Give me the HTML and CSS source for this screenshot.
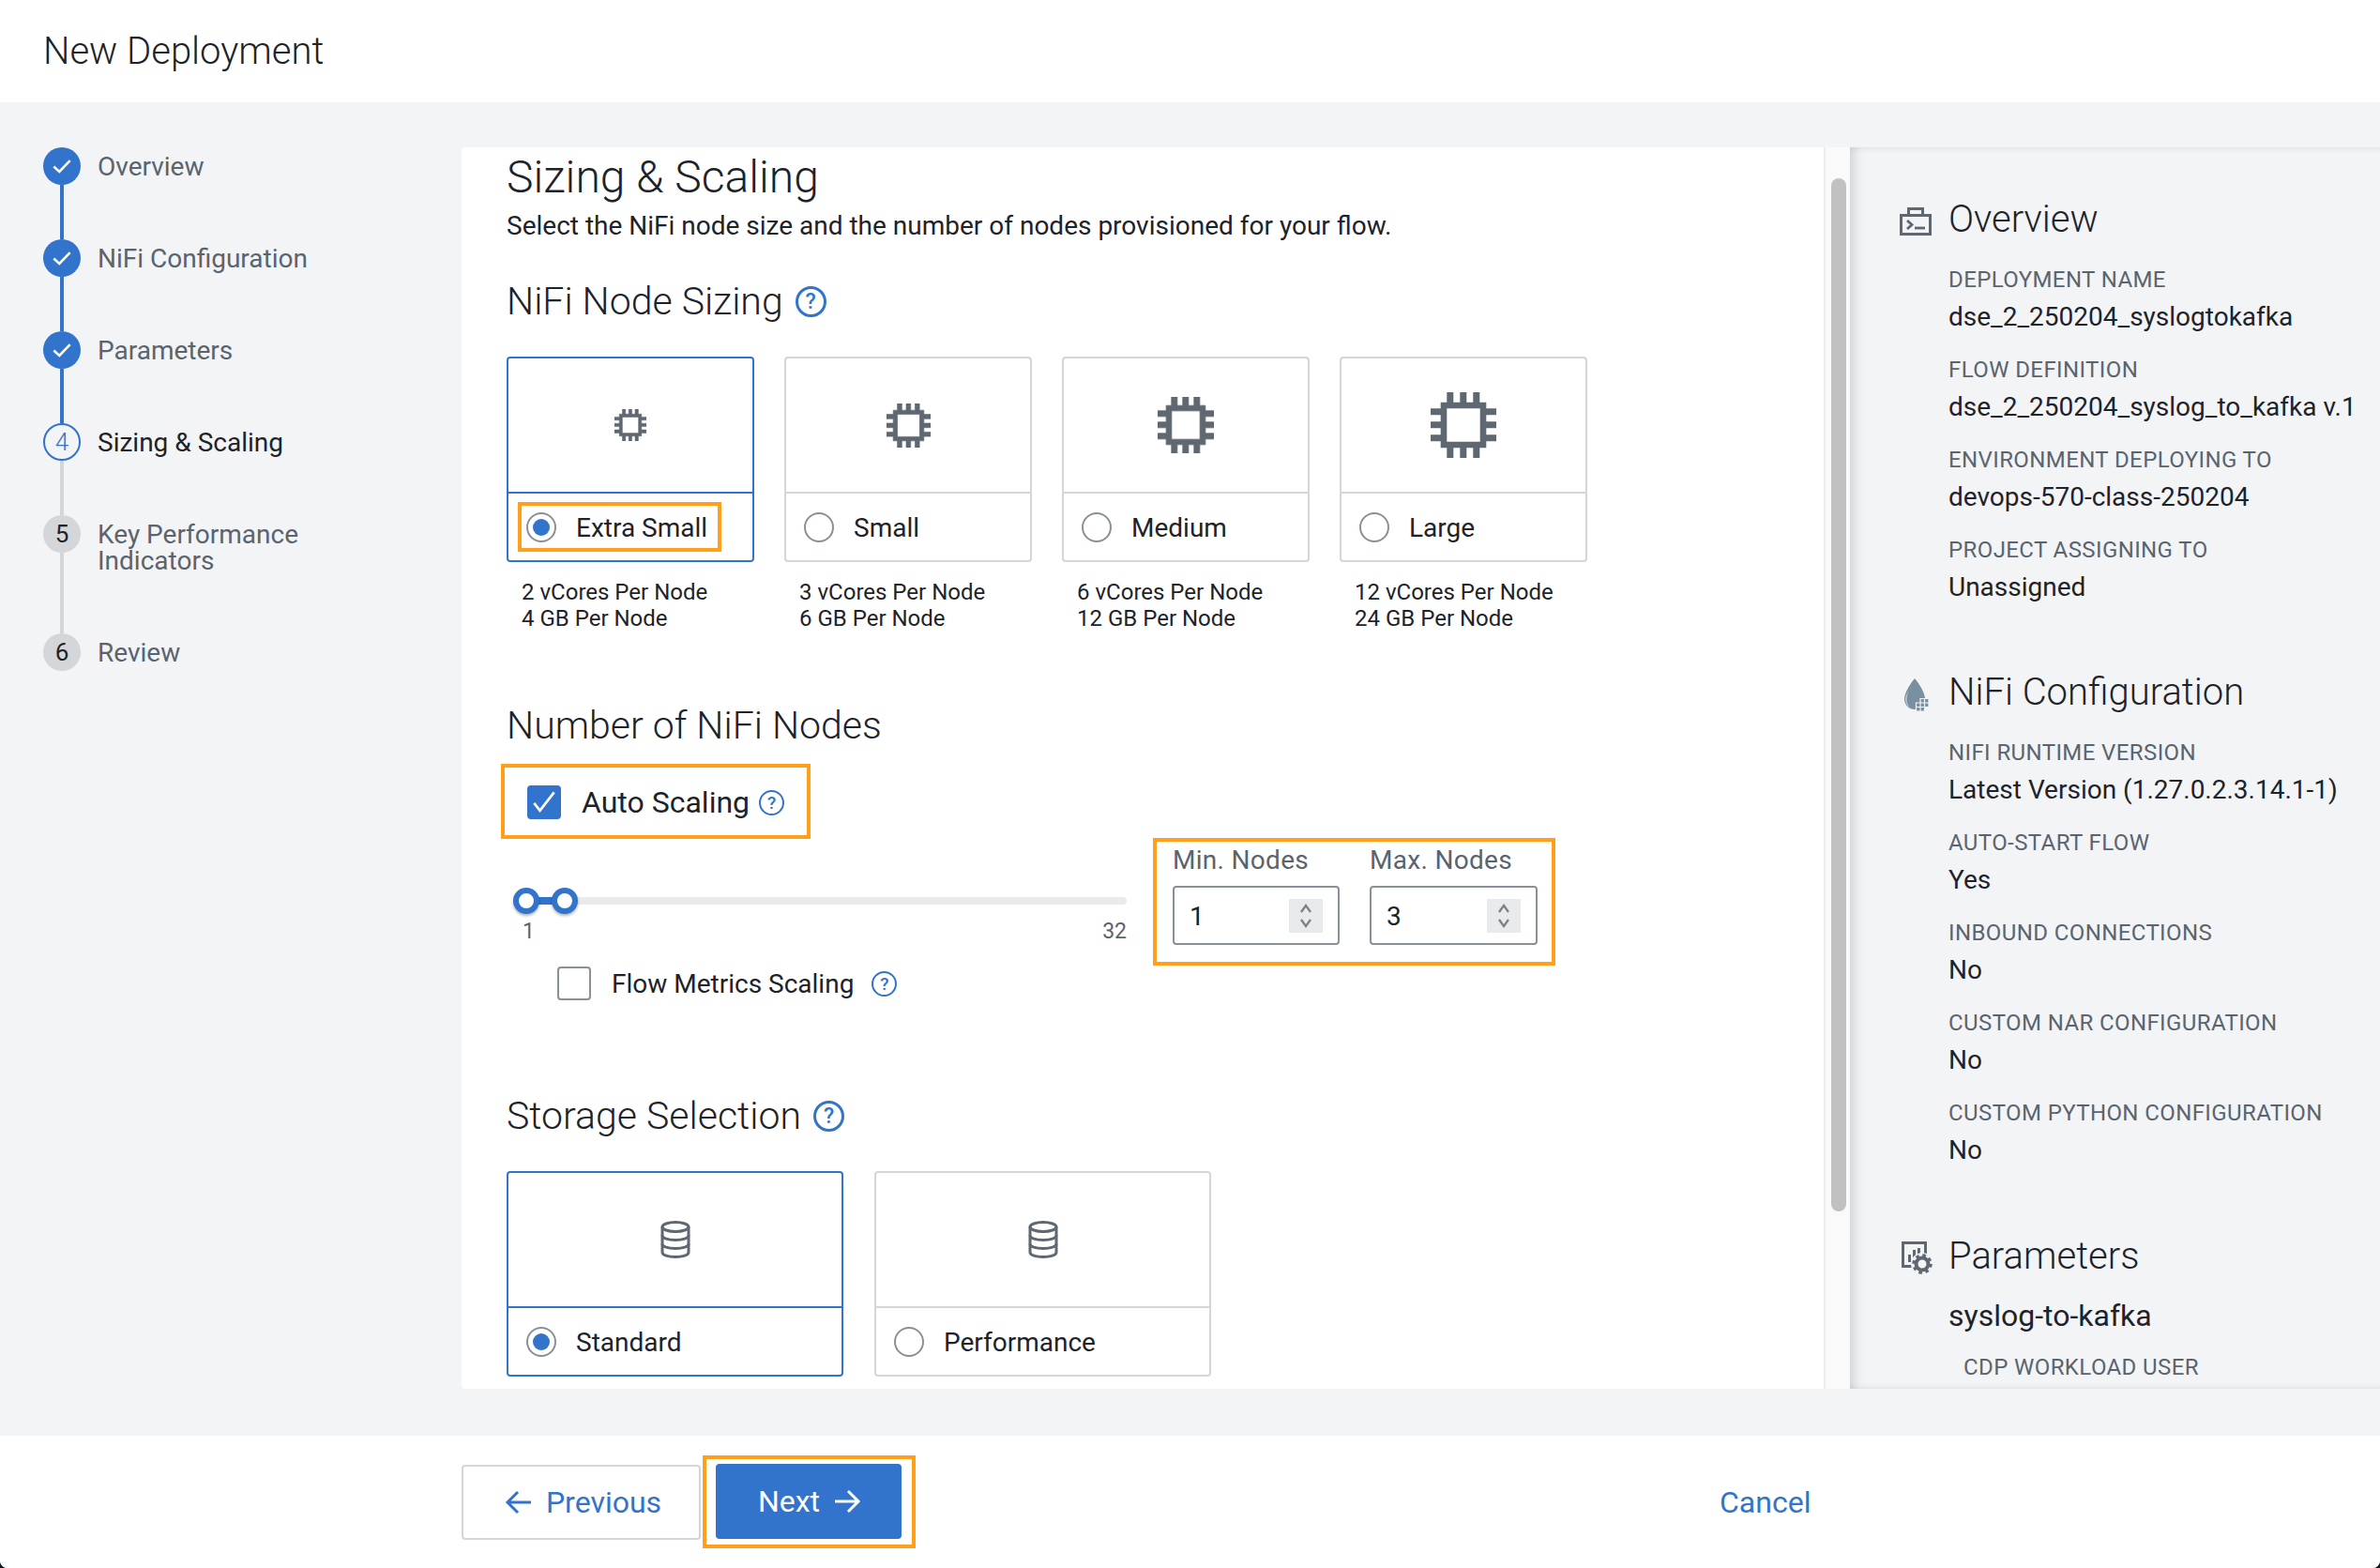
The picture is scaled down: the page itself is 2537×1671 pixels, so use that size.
FILE: index.html
```html
<!DOCTYPE html>
<html lang="en">
<head>
<meta charset="utf-8">
<title>New Deployment</title>
<link rel="stylesheet" href="styles.css">
</head>
<body>
<svg class="defs" width="0" height="0" aria-hidden="true">
  <symbol id="chip" viewBox="0 0 70 70">
    <path fill-rule="evenodd" d="M17.3 0h7v10.7h7V0h7v10.7h7V0h7v10.7h7v6.6H70v7H59.3v7H70v7H59.3v7H70v7H59.3v7h-7V70h-7V59.3h-7V70h-7V59.3h-7V70h-7V59.3h-6.6v-7H0v-7h10.7v-7H0v-7h10.7v-7H0v-7h10.7v-6.6h6.6zM17.3 17.3v35.4h35.4V17.3z"/>
  </symbol>
  <symbol id="db" viewBox="0 0 32 40">
    <g fill="none" stroke="currentColor" stroke-width="3">
      <ellipse cx="16" cy="6.5" rx="14" ry="5"/>
      <path d="M2 6.5v27c0 3 6 5 14 5s14-2 14-5v-27"/>
      <path d="M2 15.5c0 3 6 5 14 5s14-2 14-5"/>
      <path d="M2 24.500c0 3 6 5 14 5s14-2 14-5"/>
    </g>
  </symbol>
  <symbol id="tick" viewBox="0 0 24 24">
    <path d="M4 12.500l5.500 5L20 6.500" fill="none" stroke="#fff" stroke-width="2.400"/>
  </symbol>
  <symbol id="tick-tall" viewBox="0 0 36 36">
    <path d="M6 19l7 9L30 6" fill="none" stroke="#fff" stroke-width="3"/>
  </symbol>
</svg>
<div class="app">
  <header class="topbar"><h1 class="page-title">New Deployment</h1></header>

  <main class="workspace">
    <nav class="steps">
      <div class="step done"><div class="mark"><span class="dot"><svg class="dot-tick"><use href="#tick"/></svg></span><span class="line"></span></div><span class="step-label">Overview</span></div>
      <div class="step done"><div class="mark"><span class="dot"><svg class="dot-tick"><use href="#tick"/></svg></span><span class="line"></span></div><span class="step-label">NiFi Configuration</span></div>
      <div class="step done"><div class="mark"><span class="dot"><svg class="dot-tick"><use href="#tick"/></svg></span><span class="line"></span></div><span class="step-label">Parameters</span></div>
      <div class="step current"><div class="mark"><span class="dot">4</span><span class="line"></span></div><span class="step-label">Sizing &amp; Scaling</span></div>
      <div class="step todo tall"><div class="mark"><span class="dot">5</span><span class="line"></span></div><span class="step-label">Key Performance<br>Indicators</span></div>
      <div class="step todo"><div class="mark"><span class="dot">6</span></div><span class="step-label">Review</span></div>
    </nav>

    <section class="panel">
      <div class="form">
        <h2 class="form-title">Sizing &amp; Scaling</h2>
        <p class="form-sub">Select the NiFi node size and the number of nodes provisioned for your flow.</p>

        <h3 class="heading heading-sizing">NiFi Node Sizing <span class="help">?</span></h3>
        <div class="cards">
          <div class="size-col">
            <div class="card selected">
              <div class="card-top"><svg class="chip chip-xs"><use href="#chip"/></svg></div>
              <div class="card-bottom"><span class="choice marked"><span class="radio on"></span><span>Extra Small</span></span></div>
            </div>
            <p class="spec">2 vCores Per Node<br>4 GB Per Node</p>
          </div>
          <div class="size-col">
            <div class="card">
              <div class="card-top"><svg class="chip chip-s"><use href="#chip"/></svg></div>
              <div class="card-bottom"><span class="choice"><span class="radio"></span><span>Small</span></span></div>
            </div>
            <p class="spec">3 vCores Per Node<br>6 GB Per Node</p>
          </div>
          <div class="size-col">
            <div class="card">
              <div class="card-top"><svg class="chip chip-m"><use href="#chip"/></svg></div>
              <div class="card-bottom"><span class="choice"><span class="radio"></span><span>Medium</span></span></div>
            </div>
            <p class="spec">6 vCores Per Node<br>12 GB Per Node</p>
          </div>
          <div class="size-col">
            <div class="card">
              <div class="card-top"><svg class="chip chip-l"><use href="#chip"/></svg></div>
              <div class="card-bottom"><span class="choice"><span class="radio"></span><span>Large</span></span></div>
            </div>
            <p class="spec">12 vCores Per Node<br>24 GB Per Node</p>
          </div>
        </div>

        <h3 class="heading heading-nodes">Number of NiFi Nodes</h3>
        <div class="auto-box">
          <span class="checkbox on"><svg class="check-tick"><use href="#tick-tall"/></svg></span>
          <span class="auto-text">Auto Scaling</span>
          <span class="help help-sm">?</span>
        </div>

        <div class="scale-row">
          <div class="scale-left">
            <div class="slider">
              <span class="slider-fill"></span>
              <span class="handle handle-min"></span>
              <span class="handle handle-max"></span>
            </div>
            <div class="slider-labels"><span>1</span><span>32</span></div>
            <div class="metrics">
              <span class="checkbox"></span>
              <span class="metrics-text">Flow Metrics Scaling</span>
              <span class="help help-md">?</span>
            </div>
          </div>
          <div class="range-box">
            <div class="range-field">
              <div class="range-label">Min. Nodes</div>
              <div class="number"><span>1</span><span class="spin"><svg viewBox="0 0 16 28" class="spin-icon"><path d="M3 10l5-7 5 7M3 18l5 7 5-7" fill="none" stroke="#7a8088" stroke-width="2.200"/></svg></span></div>
            </div>
            <div class="range-field">
              <div class="range-label">Max. Nodes</div>
              <div class="number"><span>3</span><span class="spin"><svg viewBox="0 0 16 28" class="spin-icon"><path d="M3 10l5-7 5 7M3 18l5 7 5-7" fill="none" stroke="#7a8088" stroke-width="2.200"/></svg></span></div>
            </div>
          </div>
        </div>

        <h3 class="heading heading-storage">Storage Selection <span class="help">?</span></h3>
        <div class="cards storage">
          <div class="card wide selected">
            <div class="card-top"><svg class="db"><use href="#db"/></svg></div>
            <div class="card-bottom"><span class="choice"><span class="radio on"></span><span>Standard</span></span></div>
          </div>
          <div class="card wide">
            <div class="card-top"><svg class="db"><use href="#db"/></svg></div>
            <div class="card-bottom"><span class="choice"><span class="radio"></span><span>Performance</span></span></div>
          </div>
        </div>
      </div>
      <div class="track"><span class="thumb"></span></div>
    </section>

    <aside class="summary">
      <section class="sum-section">
        <h3 class="sum-title"><span class="sum-icon">
          <svg class="icon-terminal" viewBox="0 0 34 30"><g fill="none" stroke="#5f6771"><rect x="1.500" y="8.500" width="31" height="20" stroke-width="3"/><path d="M9.500 8V1.500h15V8" stroke-width="3"/><path d="M8 14l5 4.500-5 4.500" stroke-width="2.800"/><path d="M16 22h11" stroke-width="2.800"/></g></svg>
        </span>Overview</h3>
        <div class="sum-item"><div class="sum-label">DEPLOYMENT NAME</div><div class="sum-value">dse_2_250204_syslogtokafka</div></div>
        <div class="sum-item"><div class="sum-label">FLOW DEFINITION</div><div class="sum-value">dse_2_250204_syslog_to_kafka v.1</div></div>
        <div class="sum-item"><div class="sum-label">ENVIRONMENT DEPLOYING TO</div><div class="sum-value">devops-570-class-250204</div></div>
        <div class="sum-item"><div class="sum-label">PROJECT ASSIGNING TO</div><div class="sum-value">Unassigned</div></div>
      </section>
      <section class="sum-section">
        <h3 class="sum-title"><span class="sum-icon">
          <svg class="icon-drop" viewBox="0 0 30 38"><path d="M15 2C15 2 4 15 4 24a11 11 0 0 0 22 0C26 15 15 2 15 2Z" fill="#78909f"/><path d="M6.500 24c0-3 1-6 2.500-9-2.500 3.500-4 6.500-4 9 0 4 2 7 5 9-2-2-3.500-5-3.500-9Z" fill="#c3ced6"/><g fill="#78909f" stroke="#f3f4f6" stroke-width="1.200"><path d="M21 23.500h4.500V28H21zM25.500 23.500H30V28h-4.500zM16.500 28H21v4.500h-4.500zM21 28h4.500v4.500H21zM25.500 28H30v4.500h-4.500zM16.500 32.500H21V37h-4.500zM21 32.500h4.500V37H21z"/></g></svg>
        </span>NiFi Configuration</h3>
        <div class="sum-item"><div class="sum-label">NIFI RUNTIME VERSION</div><div class="sum-value">Latest Version (1.27.0.2.3.14.1-1)</div></div>
        <div class="sum-item"><div class="sum-label">AUTO-START FLOW</div><div class="sum-value">Yes</div></div>
        <div class="sum-item"><div class="sum-label">INBOUND CONNECTIONS</div><div class="sum-value">No</div></div>
        <div class="sum-item"><div class="sum-label">CUSTOM NAR CONFIGURATION</div><div class="sum-value">No</div></div>
        <div class="sum-item"><div class="sum-label">CUSTOM PYTHON CONFIGURATION</div><div class="sum-value">No</div></div>
      </section>
      <section class="sum-section sum-params">
        <h3 class="sum-title"><span class="sum-icon">
          <svg class="icon-params" viewBox="0 0 36 40"><rect x="2.500" y="3.500" width="24" height="25" fill="none" stroke="#5f6771" stroke-width="3"/><path d="M8 16h3v8H8zM13 11h3v13h-3zM18 9h3v11h-3z" fill="#5f6771"/><circle cx="23" cy="26" r="12" fill="#f3f4f6"/><circle cx="23" cy="26" r="6.500" fill="none" stroke="#5f6771" stroke-width="4"/><circle cx="23" cy="26" r="9" fill="none" stroke="#5f6771" stroke-width="3.500" stroke-dasharray="3.500 3.570"/></svg>
        </span>Parameters</h3>
        <div class="param-name">syslog-to-kafka</div>
        <div class="sum-label param-label">CDP WORKLOAD USER</div>
      </section>
    </aside>
  </main>

  <footer class="actions">
    <button class="btn btn-prev" type="button">
      <svg class="arrow" viewBox="0 0 30 28"><path d="M28 14H3M14 3L3 14l11 11" fill="none" stroke="currentColor" stroke-width="3"/></svg>Previous
    </button>
    <div class="next-box">
      <button class="btn btn-next" type="button">Next
        <svg class="arrow" viewBox="0 0 30 28"><path d="M2 14h25M16 3l11 11-11 11" fill="none" stroke="currentColor" stroke-width="3"/></svg>
      </button>
    </div>
    <a class="cancel">Cancel</a>
  </footer>
</div>
</body>
</html>
```

FILE: styles.css
```css
* { box-sizing: border-box; }
html, body { margin: 0; height: 100%; }
body { background: #0d1a20; font-family: "Roboto", "Liberation Sans", sans-serif; color: #1e2329; overflow: hidden; }
.defs { display: block; height: 0; }
h1, h2, h3, p { margin: 0; font-weight: inherit; }

.app { width: 2537px; height: 1671px; display: flex; flex-direction: column; background: #f3f4f6; border-radius: 0 0 8px 8px; overflow: hidden; }

.topbar { height: 109px; flex: none; background: #fff; display: flex; align-items: center; padding-left: 46px; }
.page-title { font-size: 40px; font-weight: 300; line-height: 48px; }

.workspace { height: 1421px; flex: none; display: flex; padding: 48px 0 50px; }

.steps { width: 492px; flex: none; padding-left: 46px; }
.step { height: 98px; display: flex; gap: 18px; }
.step.tall { height: 126px; }
.mark { width: 40px; flex: none; display: flex; flex-direction: column; align-items: center; }
.dot { width: 40px; height: 40px; flex: none; border-radius: 50%; display: flex; align-items: center; justify-content: center; font-size: 26px; }
.line { width: 4px; flex: 1; background: #d5d6da; }
.dot-tick { width: 26px; height: 26px; }
.step.done .dot { background: #3273cc; }
.step.done .line { background: #3273cc; }
.step.current .dot { border: 2px solid #3273cc; color: #3273cc; font-weight: 300; }
.step.todo .dot { background: #d5d6da; color: #1e2329; }
.step-label { font-size: 28px; line-height: 28px; margin-top: 7px; color: #5a646e; }
.step.current .step-label { color: #1e2329; }

.panel { width: 1480px; flex: none; display: flex; }
.form { width: 1452px; flex: none; background: #fff; padding: 4px 0 0 48px; overflow: hidden; border-radius: 4px 0 0 4px; }
.track { flex: 1; background: #fafafa; border-left: 2px solid #ececee; padding: 33px 0 0 6px; }
.thumb { display: block; width: 16px; height: 1101px; border-radius: 8px; background: #c1c1c1; }

.form-title { font-size: 48px; font-weight: 300; line-height: 56px; }
.form-sub { font-size: 28px; line-height: 36px; margin-top: 6px; }
.heading { font-size: 41px; font-weight: 300; line-height: 48px; display: flex; align-items: center; gap: 13px; }
.heading-sizing { margin-top: 38px; }
.heading-nodes { margin-top: 76px; }
.heading-storage { margin-top: 99px; }

.help { width: 33px; height: 33px; flex: none; border: 3px solid #3273cc; border-radius: 50%; color: #3273cc; font-size: 23px; font-weight: 500; line-height: 1; display: inline-flex; align-items: center; justify-content: center; }
.help-sm { width: 27px; height: 27px; font-size: 19px; border-width: 2.500px; }
.help-md { width: 27px; height: 27px; font-size: 19px; border-width: 2.500px; }

.cards { display: flex; gap: 32px; margin-top: 35px; }
.size-col { width: 264px; }
.card { width: 264px; height: 219px; border: 2px solid #d5d6da; border-radius: 4px; display: flex; flex-direction: column; background: #fff; }
.card.wide { width: 359px; }
.card.selected { border-color: #3273cc; }
.card-top { height: 144px; flex: none; border-bottom: 2px solid #d5d6da; display: flex; align-items: center; justify-content: center; color: #5f6771; }
.card.selected .card-top { border-bottom-color: #3273cc; }
.card-bottom { flex: 1; display: flex; align-items: center; padding-left: 10px; }
.chip { fill: #5f6771; stroke: #5f6771; stroke-width: 1; display: block; }
.chip-xs { width: 34px; height: 34px; }
.chip-s { width: 47px; height: 47px; }
.chip-m { width: 60px; height: 60px; }
.chip-l { width: 70px; height: 70px; stroke-width: 0; }
.db { width: 32px; height: 40px; }

.choice { height: 53px; display: inline-flex; align-items: center; gap: 21px; padding: 2px 11px 0 5px; border: 4px solid transparent; font-size: 28px; }
.choice.marked { border-color: #ff9f1a; }
.radio { width: 32px; height: 32px; flex: none; margin-bottom: 2px; border: 2px solid #8a9097; border-radius: 50%; display: flex; align-items: center; justify-content: center; background: #fff; }
.radio.on::after { content: ""; width: 18px; height: 18px; border-radius: 50%; background: #3273cc; }

.spec { font-size: 24px; line-height: 27.500px; margin: 19px 0 0 16px; }

.auto-box { width: 330px; height: 80px; margin: 17px 0 0 -6px; border: 4px solid #ff9f1a; display: flex; align-items: center; padding: 2px 0 0 24px; }
.checkbox { width: 36px; height: 36px; flex: none; border: 2px solid #8a9097; border-radius: 4px; display: flex; align-items: center; justify-content: center; background: #fff; }
.checkbox.on { background: #3273cc; border-color: #3273cc; }
.check-tick { width: 32px; height: 32px; flex: none; }
.auto-text { font-size: 32px; margin: 0 10px 0 22px; }

.scale-row { display: flex; margin-top: -1px; }
.scale-left { width: 689px; flex: none; padding-top: 53px; }
.slider { position: relative; height: 28px; width: 640px; margin-left: 21px; display: flex; align-items: center; }
.slider::before { content: ""; width: 100%; height: 8px; border-radius: 4px; background: #e9eaec; }
.slider-fill { position: absolute; left: 0; top: 10px; width: 41px; height: 8px; background: #3273cc; }
.handle { position: absolute; top: 0; width: 28px; height: 28px; border: 6px solid #3273cc; border-radius: 50%; background: #fff; box-shadow: 0 2px 3px rgba(0,0,0,.3); }
.handle-min { left: -14px; }
.handle-max { left: 27px; }
.slider-labels { width: 661px; display: flex; justify-content: space-between; padding-left: 17px; margin-top: 6px; font-size: 23px; line-height: 26px; color: #5a646e; }
.metrics { display: flex; align-items: center; margin: 24px 0 0 54px; height: 36px; }
.metrics-text { font-size: 28px; margin: 0 19px 0 22px; }

.range-box { width: 429px; height: 136px; border: 4px solid #ff9f1a; padding: 5px 0 0 17px; display: flex; gap: 32px; }
.range-field { width: 178px; }
.range-field + .range-field { width: 179px; }
.range-label { font-size: 28px; line-height: 30px; color: #5a646e; letter-spacing: .3px; }
.number { height: 63px; margin-top: 12px; border: 2px solid #8a9097; border-radius: 4px; display: flex; align-items: center; justify-content: space-between; padding: 2px 16px 0; font-size: 28px; }
.spin { width: 36px; height: 36px; margin-bottom: 2px; background: #e9eaec; display: flex; align-items: center; justify-content: center; }
.spin-icon { width: 16px; height: 28px; }

.storage { margin-top: 35px; gap: 33px; }

.summary { flex: 1; overflow: hidden; padding: 53px 0 0 105px; box-shadow: inset 12px 0 12px -8px rgba(0,0,0,.15), inset 0 7px 7px -6px rgba(0,0,0,.08), inset 0 -7px 7px -6px rgba(0,0,0,.08); }
.sum-section + .sum-section { margin-top: 70px; }
.sum-section.sum-params { margin-top: 71px; }
.sum-title { font-size: 40px; font-weight: 300; line-height: 48px; display: flex; align-items: center; margin-left: -52px; margin-bottom: 25px; }
.sum-icon { width: 52px; flex: none; display: flex; margin-top: 3px; }
.icon-terminal { width: 34px; height: 30px; margin-left: 0; }
.icon-drop { width: 30px; height: 38px; margin-left: 1px; }
.icon-params { width: 36px; height: 40px; margin-left: 1px; }
.sum-item { margin-bottom: 23px; }
.sum-label { font-size: 24px; line-height: 30px; color: #5a646e; letter-spacing: .4px; white-space: nowrap; }
.sum-value { font-size: 28px; line-height: 36px; margin-top: 7px; white-space: nowrap; }
.param-name { font-size: 32px; line-height: 40px; margin-top: -6px; }
.param-label { margin: 20px 0 0 16px; }

.actions { flex: 1; background: #fff; display: flex; align-items: center; padding-left: 492px; }
.btn { height: 80px; border-radius: 4px; font-family: inherit; font-size: 32px; display: flex; align-items: center; justify-content: center; gap: 14px; }
.btn-prev { width: 255px; padding-left: 10px; background: #fff; border: 2px solid #d5d6da; color: #3273cc; }
.btn-next { width: 198px; padding-right: 4px; background: #3273cc; border: none; color: #fff; }
.next-box { width: 227px; height: 99px; margin-left: 2px; border: 4px solid #ff9f1a; padding: 5px 10px; }
.arrow { width: 30px; height: 28px; }
.cancel { font-size: 32px; color: #3273cc; margin-left: 857px; }
```
